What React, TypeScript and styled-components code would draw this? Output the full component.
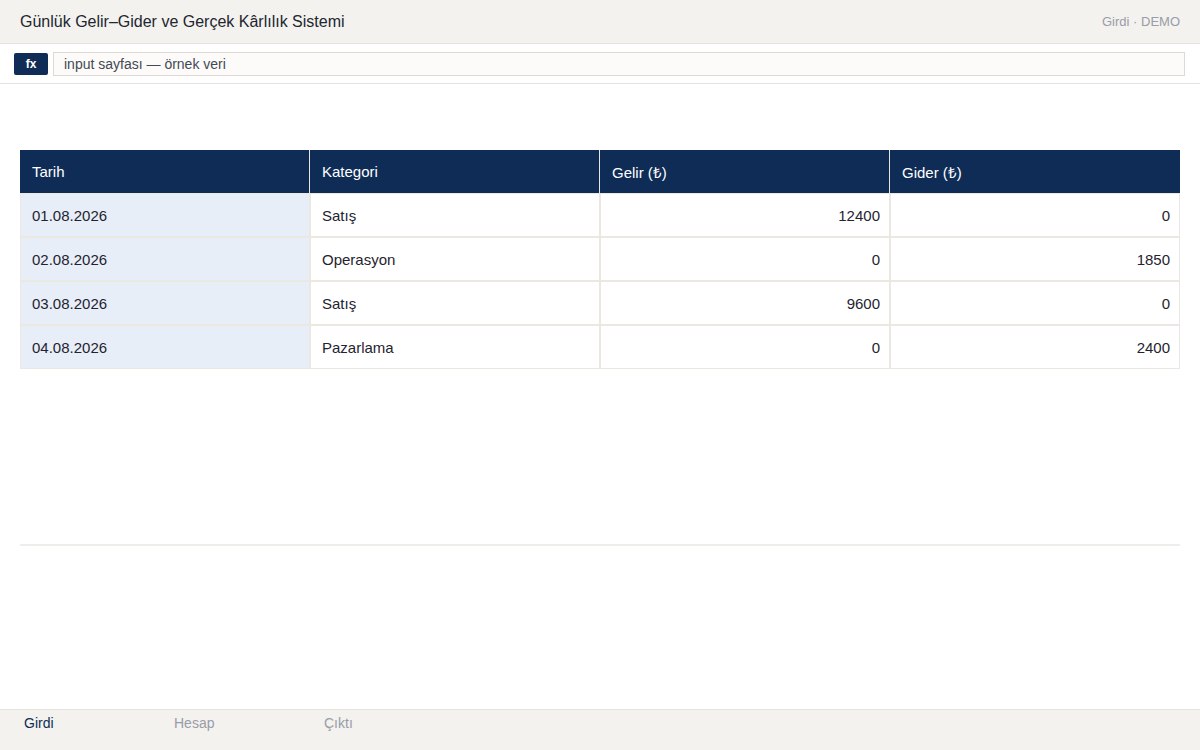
import styled, { createGlobalStyle } from 'styled-components';

const GlobalStyle = createGlobalStyle`
  html, body, #root {
    margin: 0;
    height: 100%;
  }
  body {
    font-family: "Liberation Sans", Arial, sans-serif;
    color: #1f2430;
    background: #ffffff;
  }
`;

const Page = styled.div`
  display: flex;
  flex-direction: column;
  height: 750px;
`;

const TopBar = styled.header`
  display: flex;
  align-items: center;
  justify-content: space-between;
  height: 44px;
  padding: 0 20px;
  background: #f3f2ee;
  border-bottom: 1px solid #e6e3dc;
  box-sizing: border-box;
`;

const Title = styled.h1`
  margin: 0;
  font-size: 16px;
  font-weight: 400;
  color: #222630;
`;

const Badge = styled.span`
  font-size: 13px;
  color: #9a9ca8;
`;

const FormulaBar = styled.div`
  display: flex;
  align-items: center;
  gap: 5px;
  height: 40px;
  padding: 0 15px 0 14px;
  border-bottom: 1px solid #e6e3dc;
  box-sizing: border-box;
`;

const FxButton = styled.span`
  display: flex;
  align-items: center;
  justify-content: center;
  width: 34px;
  height: 22px;
  border-radius: 2px;
  background: #0e2c56;
  color: #ffffff;
  font-size: 12px;
  font-weight: 700;
`;

const FormulaInput = styled.div`
  flex: 1;
  height: 24px;
  display: flex;
  align-items: center;
  padding: 0 10px;
  border: 1px solid #dedad3;
  background: #fcfbf9;
  font-size: 14px;
  color: #444955;
  box-sizing: border-box;
`;

const Main = styled.main`
  flex: 1;
  padding: 66px 20px 0;
`;

const Sheet = styled.table`
  width: 100%;
  border-collapse: separate;
  border-spacing: 0;
  table-layout: fixed;
  font-size: 15px;
`;

const HeadCell = styled.th`
  height: 43px;
  padding: 0 12px;
  text-align: left;
  font-weight: 400;
  color: #ffffff;
  background: #0e2c56;
  border-right: 1px solid #e8e5e0;
  &:last-child {
    border-right: none;
  }
`;

const Cell = styled.td<{ $num?: boolean; $key?: boolean }>`
  height: 42px;
  padding: 0 ${(p) => (p.$num ? '9px' : '11px')};
  text-align: ${(p) => (p.$num ? 'right' : 'left')};
  background: ${(p) => (p.$key ? '#e7eef8' : '#ffffff')};
  color: #1f2430;
  border: 1px solid #ebe8e2;
`;

const Divider = styled.hr`
  margin: 175px 0 0;
  border: none;
  border-top: 2px solid #efedea;
`;

const TabBar = styled.nav`
  display: flex;
  height: 41px;
  padding: 0 24px;
  background: #f3f2ee;
  border-top: 1px solid #e6e3dc;
  box-sizing: border-box;
`;

const Tab = styled.span<{ $active?: boolean }>`
  width: 150px;
  padding-top: 5px;
  font-size: 14px;
  color: ${(p) => (p.$active ? '#0e2c56' : '#9a9ca8')};
`;

const rows = [
  { date: '01.08.2026', cat: 'Satış', gelir: 12400, gider: 0 },
  { date: '02.08.2026', cat: 'Operasyon', gelir: 0, gider: 1850 },
  { date: '03.08.2026', cat: 'Satış', gelir: 9600, gider: 0 },
  { date: '04.08.2026', cat: 'Pazarlama', gelir: 0, gider: 2400 },
];

export default function App() {
  return (
    <>
      <GlobalStyle />
      <Page>
        <TopBar>
          <Title>Günlük Gelir–Gider ve Gerçek Kârlılık Sistemi</Title>
          <Badge>Girdi · DEMO</Badge>
        </TopBar>
        <FormulaBar>
          <FxButton>fx</FxButton>
          <FormulaInput>input sayfası — örnek veri</FormulaInput>
        </FormulaBar>
        <Main>
          <Sheet>
            <thead>
              <tr>
                <HeadCell>Tarih</HeadCell>
                <HeadCell>Kategori</HeadCell>
                <HeadCell>Gelir (₺)</HeadCell>
                <HeadCell>Gider (₺)</HeadCell>
              </tr>
            </thead>
            <tbody>
              {rows.map((r) => (
                <tr key={r.date}>
                  <Cell $key>{r.date}</Cell>
                  <Cell>{r.cat}</Cell>
                  <Cell $num>{r.gelir}</Cell>
                  <Cell $num>{r.gider}</Cell>
                </tr>
              ))}
            </tbody>
          </Sheet>
          <Divider />
        </Main>
        <TabBar>
          <Tab $active>Girdi</Tab>
          <Tab>Hesap</Tab>
          <Tab>Çıktı</Tab>
        </TabBar>
      </Page>
    </>
  );
}
